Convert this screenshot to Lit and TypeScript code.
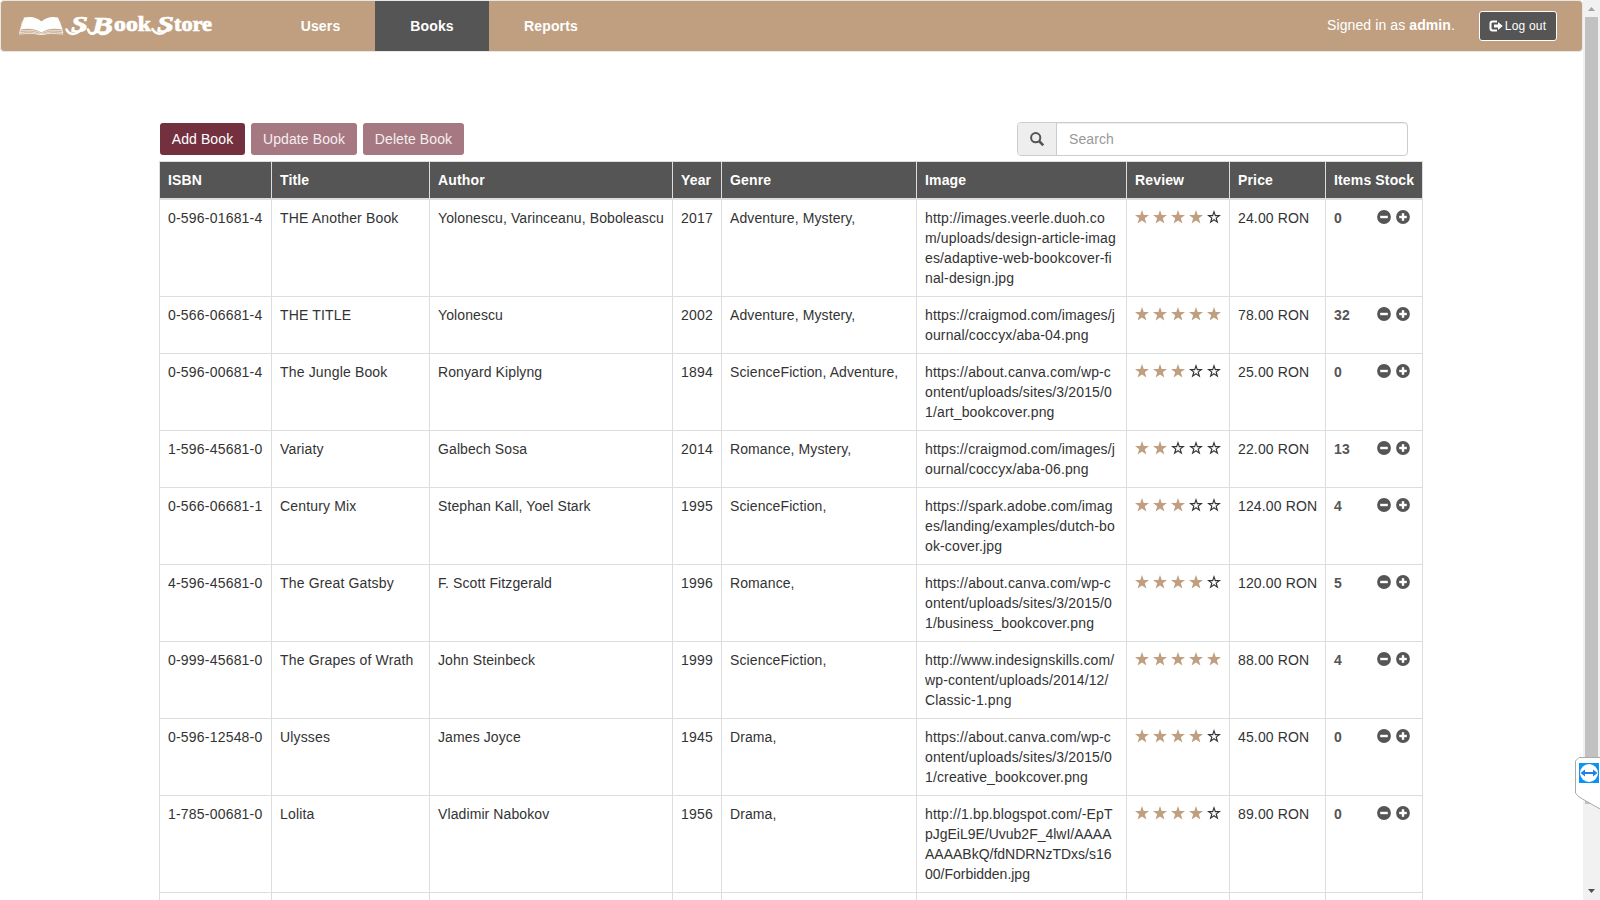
import { LitElement, html, css, svg } from "lit";
import { customElement } from "lit/decorators.js";

interface Book {
  isbn: string;
  title: string;
  author: string;
  year: number;
  genre: string;
  image: string[];
  stars: number;
  price: string;
  stock: number;
}

const BOOKS: Book[] = [
  { isbn: "0-596-01681-4", title: "THE Another Book", author: "Yolonescu, Varinceanu, Boboleascu", year: 2017, genre: "Adventure, Mystery,", image: ["http://images.veerle.duoh.co", "m/uploads/design-article-imag", "es/adaptive-web-bookcover-fi", "nal-design.jpg"], stars: 4, price: "24.00 RON", stock: 0 },
  { isbn: "0-566-06681-4", title: "THE TITLE", author: "Yolonescu", year: 2002, genre: "Adventure, Mystery,", image: ["https://craigmod.com/images/j", "ournal/coccyx/aba-04.png"], stars: 5, price: "78.00 RON", stock: 32 },
  { isbn: "0-596-00681-4", title: "The Jungle Book", author: "Ronyard Kiplyng", year: 1894, genre: "ScienceFiction, Adventure,", image: ["https://about.canva.com/wp-c", "ontent/uploads/sites/3/2015/0", "1/art_bookcover.png"], stars: 3, price: "25.00 RON", stock: 0 },
  { isbn: "1-596-45681-0", title: "Variaty", author: "Galbech Sosa", year: 2014, genre: "Romance, Mystery,", image: ["https://craigmod.com/images/j", "ournal/coccyx/aba-06.png"], stars: 2, price: "22.00 RON", stock: 13 },
  { isbn: "0-566-06681-1", title: "Century Mix", author: "Stephan Kall, Yoel Stark", year: 1995, genre: "ScienceFiction,", image: ["https://spark.adobe.com/imag", "es/landing/examples/dutch-bo", "ok-cover.jpg"], stars: 3, price: "124.00 RON", stock: 4 },
  { isbn: "4-596-45681-0", title: "The Great Gatsby", author: "F. Scott Fitzgerald", year: 1996, genre: "Romance,", image: ["https://about.canva.com/wp-c", "ontent/uploads/sites/3/2015/0", "1/business_bookcover.png"], stars: 4, price: "120.00 RON", stock: 5 },
  { isbn: "0-999-45681-0", title: "The Grapes of Wrath", author: "John Steinbeck", year: 1999, genre: "ScienceFiction,", image: ["http://www.indesignskills.com/", "wp-content/uploads/2014/12/", "Classic-1.png"], stars: 5, price: "88.00 RON", stock: 4 },
  { isbn: "0-596-12548-0", title: "Ulysses", author: "James Joyce", year: 1945, genre: "Drama,", image: ["https://about.canva.com/wp-c", "ontent/uploads/sites/3/2015/0", "1/creative_bookcover.png"], stars: 4, price: "45.00 RON", stock: 0 },
  { isbn: "1-785-00681-0", title: "Lolita", author: "Vladimir Nabokov", year: 1956, genre: "Drama,", image: ["http://1.bp.blogspot.com/-EpT", "pJgEiL9E/Uvub2F_4lwI/AAAA", "AAAABkQ/fdNDRNzTDxs/s16", "00/Forbidden.jpg"], stars: 4, price: "89.00 RON", stock: 0 },
];

const HEADERS = ["ISBN", "Title", "Author", "Year", "Genre", "Image", "Review", "Price", "Items Stock"];

const STAR = "M7 0 8.700 5 14 5.100 9.800 8.300 11.400 13.500 7 10.400 2.600 13.500 4.200 8.300 0 5.100 5.300 5Z";
const STAR_HOLE = "M7 3.600 7.900 6.200 10.700 6.300 8.500 8 9.300 10.700 7 9.100 4.700 10.700 5.500 8 3.300 6.300 6.100 6.200Z";

@customElement("app-root")
export class AppRoot extends LitElement {
  static styles = css`
    :host { display: block; height: 900px; overflow: hidden; background: #fff; color: #333; font: 14px/20px "Liberation Sans", Arial, sans-serif; }
    * { box-sizing: border-box; }
    .window { display: flex; height: 900px; position: relative; }
    .page { width: 1583px; height: 900px; overflow: hidden; }
    .nav { display: flex; height: 52px; border: 1px solid #e7e7e7; border-radius: 4px; background: #c09f80; color: #fff; }
    .brand { width: 264px; padding: 9px 0 0 17px; }
    .logo { display: block; }
    .wordmark { font: bold 20px "Liberation Serif", serif; fill: #fff; stroke: #fff; stroke-width: .7px; }
    .cap { font-size: 23px; font-style: italic; }
    .tab { width: 110px; padding: 15px 0 15px 1px; text-align: center; font-weight: bold; letter-spacing: .15px; white-space: nowrap; }
    .tab.wide { width: 114px; padding-left: 0; }
    .tab.last { width: 124px; padding-left: 0; }
    .active { background: #555; }
    .signed { margin-left: auto; padding-top: 14px; letter-spacing: .1px; }
    .logout { display: flex; align-items: center; justify-content: center; gap: 2px; width: 78px; height: 30px; margin: 10px 25px 0 24px; padding-right: 1px; border: 1px solid #fff; border-radius: 3px; background: #555; font-size: 12px; letter-spacing: .2px; }
    .content { width: 1264px; margin: 71px 0 0 159px; }
    .toolbar { display: flex; height: 38px; padding-left: 1px; gap: 6px; }
    .btn { height: 32px; border-radius: 3px; background: #733140; color: #fff; text-align: center; line-height: 32px; letter-spacing: .1px; }
    .dim { background: #a67882; color: #f5eff0; }
    .add { width: 85px; }
    .upd { width: 106px; }
    .del { width: 101px; }
    .search { display: flex; width: 391px; height: 34px; margin: -1px 15px 0 auto; border: 1px solid #ccc; border-radius: 4px; box-shadow: inset 0 1px 1px rgba(0,0,0,.075); color: #999; }
    .addon { display: flex; align-items: center; justify-content: center; width: 39px; border-right: 1px solid #ccc; border-radius: 3px 0 0 3px; background: #eee; }
    .field { padding: 6px 12px; letter-spacing: .1px; }
    .grid { display: grid; grid-template-columns: 112px 158px 243px 49px 195px 210px 103px 96px 97px; width: 1264px; border-right: 1px solid #ddd; }
    .cell { border-left: 1px solid #ddd; border-bottom: 1px solid #ddd; padding: 8px 0 8px 8px; white-space: nowrap; letter-spacing: .1px; }
    .head { border-top: 1px solid #ddd; border-bottom-width: 2px; background: #555; color: #fff; font-weight: bold; letter-spacing: .15px; }
    .title { letter-spacing: .16px; }
    .line { display: block; letter-spacing: .14px; }
    .long .line + .line { letter-spacing: -.01px; }
    .stars { display: flex; gap: 4px; padding-top: 10px; }
    .stock { display: flex; justify-content: space-between; padding-right: 12.500px; font-weight: bold; color: #555; letter-spacing: .2px; }
    .steps { display: flex; gap: 5px; padding-top: 2px; }
    .icon { display: block; }
    .num { letter-spacing: .2px; }
    .price { letter-spacing: .14px; }
    .scroll { display: flex; flex-direction: column; align-items: center; width: 17px; background: #f1f1f1; }
    .arrow { display: block; height: 17px; }
    .thumb { width: 13px; height: 787px; background: #c1c1c1; }
    .down { margin-top: auto; }
    .viewer { position: absolute; right: 0; top: 756px; }
  `;

  private star(full: boolean) {
    return html`<svg class="icon" width="14" height="14" viewBox="0 0 14 14">
      <path fill-rule="evenodd" fill=${full ? "#c09f80" : "#333"} d=${full ? STAR : STAR + STAR_HOLE}></path></svg>`;
  }

  private step(plus: boolean) {
    return html`<svg class="icon" width="14" height="14" viewBox="0 0 14 14"><circle cx="7" cy="7" r="6.900" fill="#555"></circle>
      <path fill="#fff" d="M3.200 5.800h7.600v2.400H3.200z"></path>${plus ? svg`<path fill="#fff" d="M5.800 3.200h2.400v7.600H5.800z"></path>` : ""}</svg>`;
  }

  private row(b: Book) {
    return html`
      <div class="cell num">${b.isbn}</div>
      <div class="cell title">${b.title}</div>
      <div class="cell">${b.author}</div>
      <div class="cell num">${b.year}</div>
      <div class="cell">${b.genre}</div>
      <div class="cell ${b.title === "Lolita" ? "long" : ""}">${b.image.map((l) => html`<span class="line">${l}</span>`)}</div>
      <div class="cell stars">${[1, 2, 3, 4, 5].map((n) => this.star(n <= b.stars))}</div>
      <div class="cell price">${b.price}</div>
      <div class="cell stock"><span>${b.stock}</span><div class="steps">${this.step(false)}${this.step(true)}</div></div>`;
  }

  render() {
    return html`<div class="window">
      <div class="page">
        <div class="nav">
          <div class="brand"><svg class="logo" width="210" height="34" viewBox="0 0 210 34">
            <path fill="#fff" d="M6 7.500Q17 5.500 23.500 11.500Q30 5.500 40 7.500L44.500 19.500Q31 17 23.500 22.500Q15 17 2.500 19.500Z"></path>
            <path fill="none" stroke="#fff" stroke-opacity=".85" stroke-width=".8" d="M4.500 11L1.500 23.500M41.500 11L45 23.500M2 21Q15 18.500 23.500 23.500Q31 18.500 44.500 21M1.500 22.700Q15 20.500 21 24H26Q31 20.500 45 22.700M1 24.200Q15 22.500 21 24.500H26Q31 22.500 45 24.200"></path>
            <path fill="none" stroke="#fff" stroke-width="2.600" stroke-linecap="round" d="M48.500 19.500Q51 25 57 23.500Q62 22 64 17M70 19.500Q72 25.500 76.500 23Q79 21 80 18M82 23.500Q88 25.500 92 20M134.500 19Q138 25.500 145 23Q149 21 151 16"></path>
            <text class="wordmark cap" x="53" y="22" textLength="17" lengthAdjust="spacingAndGlyphs">S</text>
            <text class="wordmark cap" x="74" y="23" textLength="21" lengthAdjust="spacingAndGlyphs">B</text>
            <text class="wordmark" x="96" y="20.500" textLength="37" lengthAdjust="spacingAndGlyphs">ook</text>
            <text class="wordmark cap" x="139" y="22" textLength="17" lengthAdjust="spacingAndGlyphs">S</text>
            <text class="wordmark" x="156" y="20.500" textLength="38" lengthAdjust="spacingAndGlyphs">tore</text>
          </svg></div>
          <div class="tab">Users</div><div class="tab wide active">Books</div><div class="tab last">Reports</div>
          <div class="signed">Signed in as <b>admin</b>.</div>
          <div class="logout"><svg class="icon" width="14" height="12" viewBox="0 0 14 12"><path fill="none" stroke="#fff" stroke-width="2" d="M8 1.500H3.500Q1.500 1.500 1.500 3.500V8.500Q1.500 10.500 3.500 10.500H8"></path><path fill="#fff" d="M5 4.500H9V2L13.700 6 9 10V7.500H5z"></path></svg><span>Log out</span></div>
        </div>
        <div class="content">
          <div class="toolbar">
            <div class="btn add">Add Book</div><div class="btn dim upd">Update Book</div><div class="btn dim del">Delete Book</div>
            <div class="search"><div class="addon"><svg class="icon" width="14" height="14" viewBox="0 0 14 14"><circle cx="5.700" cy="5.700" r="4.600" fill="none" stroke="#555" stroke-width="2"></circle><path stroke="#555" stroke-width="2.600" d="M9 9l4.300 4.300"></path></svg></div><div class="field">Search</div></div>
          </div>
          <div class="grid">${HEADERS.map((h) => html`<div class="cell head">${h}</div>`)}${BOOKS.map((b) => this.row(b))}${HEADERS.map(() => html`<div class="cell">&nbsp;</div>`)}</div>
        </div>
      </div>
      <div class="scroll">
        <svg class="arrow" width="17" height="17"><path fill="#a3a3a3" d="M5 11h7L8.500 7z"></path></svg>
        <div class="thumb"></div>
        <svg class="arrow down" width="17" height="17"><path fill="#505050" d="M5 6h7L8.500 10z"></path></svg>
      </div>
      <svg class="viewer" width="25" height="54" viewBox="0 0 25 54">
        <path fill="#fff" stroke="#aaa" d="M26 1.500H4L.5 5V37L4 41L26 53.500"></path>
        <rect x="4" y="7" width="20" height="20" fill="#0a94f5"></rect><circle cx="14" cy="17" r="9" fill="#fff"></circle>
        <path fill="#2080e8" d="M5.500 17l4.500-3.500v2.500h8v-2.500l4.500 3.500-4.500 3.500v-2.500h-8v2.500z"></path>
      </svg>
    </div>`;
  }
}
